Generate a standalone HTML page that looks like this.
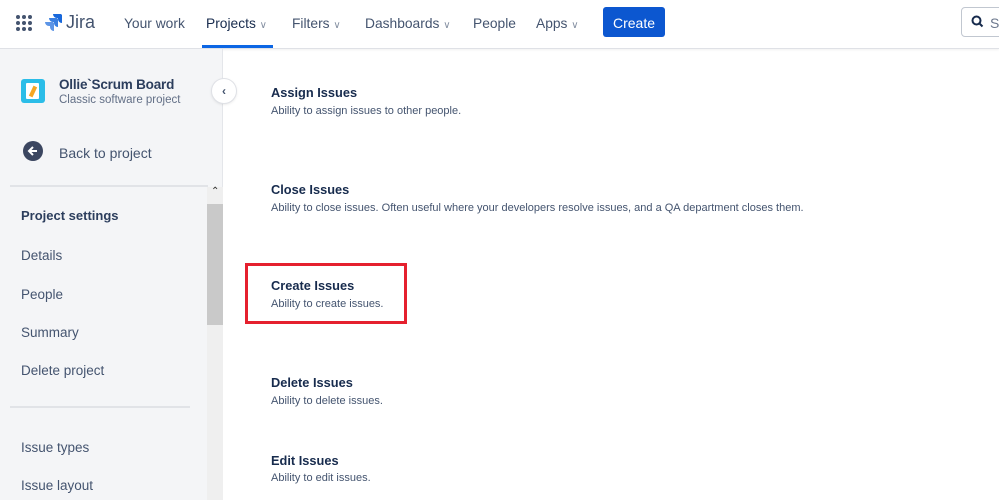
<!DOCTYPE html>
<html><head><style>
*{margin:0;padding:0;box-sizing:border-box}
body{width:999px;height:500px;overflow:hidden;background:#fff;font-family:"Liberation Sans",sans-serif;color:#172b4d;position:relative}
.abs{position:absolute}
.nav{font-size:13.8px;color:#44546f;top:16px}
.side{left:0;top:49px;width:223px;height:451px;background:#f4f5f7;border-right:1px solid #e4e6ea}
.si{left:21px;font-size:13.5px;color:#44546f}
h3{position:absolute;left:271px;font-size:12.8px;font-weight:bold;color:#172b4d}
.d{position:absolute;left:271px;font-size:11px;color:#44546f}
</style></head><body>
<div class="abs" style="left:0;top:0;width:999px;height:49px;border-bottom:1px solid #dfe1e6;box-shadow:0 1px 2px rgba(0,0,0,.06)"></div>
<svg class="abs" style="left:15px;top:14px" width="18" height="18" viewBox="0 0 18 18" fill="#44546f"><circle cx="3" cy="3" r="2"/><circle cx="9" cy="3" r="2"/><circle cx="15" cy="3" r="2"/><circle cx="3" cy="9" r="2"/><circle cx="9" cy="9" r="2"/><circle cx="15" cy="9" r="2"/><circle cx="3" cy="15" r="2"/><circle cx="9" cy="15" r="2"/><circle cx="15" cy="15" r="2"/></svg>
<svg class="abs" style="left:44px;top:13px" width="18" height="18" viewBox="0 0 18 18" fill="#1868db"><path d="M17 1H9a4 4 0 004 4h1v1a4 4 0 004 4V2z"/><path d="M13 5H5a4 4 0 004 4h1v1a4 4 0 004 4V6z" opacity=".85"/><path d="M9 9H1a4 4 0 004 4h1v1a4 4 0 004 4v-8z" opacity=".7"/></svg>
<div class="abs" style="left:66px;top:12px;font-size:18px;color:#44546f">Jira</div>
<div class="abs nav" style="left:124px">Your work</div>
<div class="abs nav" style="left:206px;color:#172b4d">Projects <span style="font-size:10px;color:#8590a2">&#8744;</span></div>
<div class="abs" style="left:202px;top:45px;width:71px;height:3px;background:#0c66e4"></div>
<div class="abs nav" style="left:292px">Filters <span style="font-size:10px;color:#8590a2">&#8744;</span></div>
<div class="abs nav" style="left:365px">Dashboards <span style="font-size:10px;color:#8590a2">&#8744;</span></div>
<div class="abs nav" style="left:473px">People</div>
<div class="abs nav" style="left:536px">Apps <span style="font-size:10px;color:#8590a2">&#8744;</span></div>
<div class="abs" style="left:603px;top:7px;width:62px;height:30px;background:#0c57d0;border-radius:3px;color:#fff;font-size:14px;text-align:center;line-height:32px">Create</div>
<div class="abs" style="left:961px;top:7px;width:50px;height:30px;border:1px solid #c1c7d0;border-radius:4px"></div>
<svg class="abs" style="left:971px;top:15px" width="13" height="13" viewBox="0 0 13 13" fill="none" stroke="#172b4d" stroke-width="2"><circle cx="5.5" cy="5.5" r="4"/><path d="M8.5 8.5l3 3"/></svg>
<div class="abs" style="left:990px;top:15px;font-size:14px;color:#6b778c">S</div>

<div class="abs side"></div>
<div class="abs" style="left:21px;top:79px;width:24px;height:24px;background:#2bbde8;border-radius:3px"></div>
<div class="abs" style="left:26px;top:83px;width:13px;height:16px;background:#fff;border-radius:1px"></div>
<div class="abs" style="left:31px;top:86px;width:4px;height:11px;background:#f5a623;transform:rotate(25deg)"></div>
<div class="abs" style="left:59px;top:77px;font-size:13.5px;font-weight:bold;color:#2c3e5d;letter-spacing:-.2px">Ollie`Scrum Board</div>
<div class="abs" style="left:59px;top:94px;font-size:11.5px;color:#626f86">Classic software project</div>
<div class="abs" style="left:212px;top:79px;width:24px;height:24px;border-radius:50%;background:#fff;box-shadow:0 0 0 1px #dfe1e6,0 1px 3px rgba(0,0,0,.15);text-align:center;font-size:12px;line-height:24px;color:#44546f;font-weight:bold">&#8249;</div>
<div class="abs" style="left:23px;top:141px;width:20px;height:20px;border-radius:50%;background:#3b4660"></div>
<svg class="abs" style="left:27px;top:145px" width="12" height="12" viewBox="0 0 12 12" fill="none" stroke="#fff" stroke-width="2"><path d="M10 6H2M6 2L2 6l4 4"/></svg>
<div class="abs si" style="left:59px;top:145px;font-size:14px">Back to project</div>
<div class="abs" style="left:10px;top:185px;width:198px;height:2px;background:#e1e3e7"></div>
<div class="abs" style="left:207px;top:187px;width:16px;height:313px;background:#efefef"></div>
<div class="abs" style="left:207px;top:204px;width:16px;height:121px;background:#c9c9c9"></div>
<div class="abs" style="left:211px;top:186px;font-size:10px;color:#333">&#8963;</div>
<div class="abs si" style="top:208px;font-weight:bold;color:#2c3e5d;font-size:13px">Project settings</div>
<div class="abs si" style="top:248px">Details</div>
<div class="abs si" style="top:287px">People</div>
<div class="abs si" style="top:325px">Summary</div>
<div class="abs si" style="top:363px">Delete project</div>
<div class="abs" style="left:10px;top:406px;width:180px;height:2px;background:#e1e3e7"></div>
<div class="abs si" style="top:440px">Issue types</div>
<div class="abs si" style="top:478px">Issue layout</div>

<h3 style="top:85px">Assign Issues</h3><div class="d" style="top:105px">Ability to assign issues to other people.</div>
<h3 style="top:182px">Close Issues</h3><div class="d" style="top:202px">Ability to close issues. Often useful where your developers resolve issues, and a QA department closes them.</div>
<h3 style="top:278px">Create Issues</h3><div class="d" style="top:298px">Ability to create issues.</div>
<div class="abs" style="left:245px;top:263px;width:162px;height:61px;border:3px solid #e5202e"></div>
<h3 style="top:375px">Delete Issues</h3><div class="d" style="top:395px">Ability to delete issues.</div>
<h3 style="top:453px">Edit Issues</h3><div class="d" style="top:472px">Ability to edit issues.</div>
</body></html>
